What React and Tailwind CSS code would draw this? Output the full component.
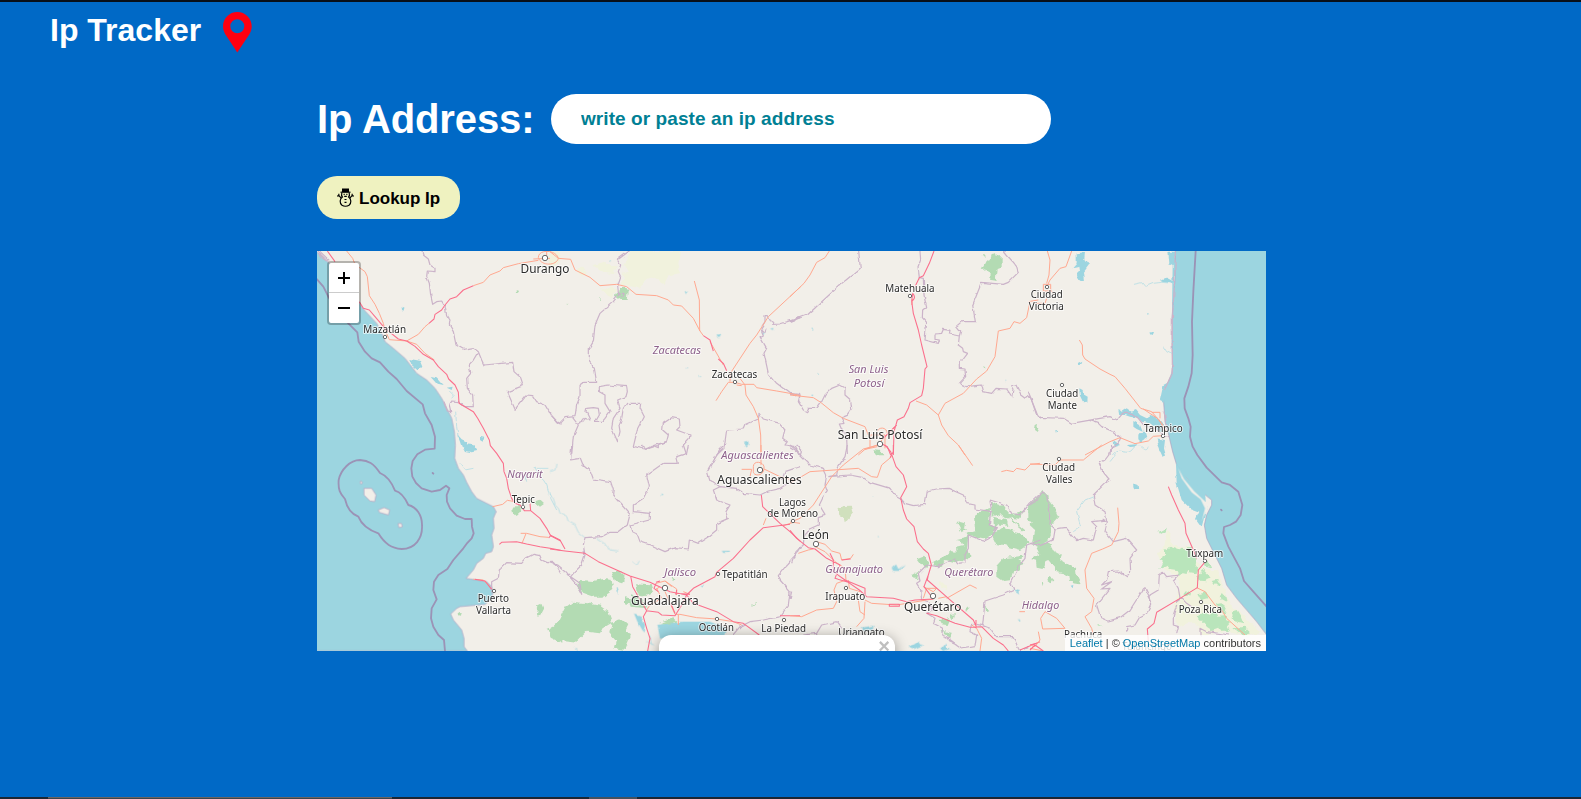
import React from 'react';

const WATER = '#9cd5e0';
const BORDER = '#cbb3c9';
const MARITIME = '#9b93b6';
const MOTORWAY = '#fb6f8c';
const TRUNK = '#ffa890';
const FOREST = '#b3dbb3';

/* Each sheet is drawn on a grid of thirds of a pixel and placed on the map by its origin. */
const sheets = [
  {
    at: 'translate(-7 -6) scale(.33333)',
    water:
      'M0,0 L21,20 45,45 65,60 100,110 150,178 165,198 200,235 215,265 225,290 250,310 285,340 320,385 350,405 375,430 395,460 410,490 425,520 433,560 436,600 434,640 445,670 460,690 470,712 485,740 500,760 530,775 550,785 558,800 550,820 552,850 545,870 550,905 545,920 527,925 520,940 500,955 490,975 468,1000 500,1005 530,1010 545,1025 548,1045 545,1060 525,1078 450,1085 440,1090 422,1107 430,1125 455,1155 462,1180 462,1205 472,1218 0,1218 Z',
    ponds:
      'M298,342 L330,348 337,365 325,378 305,360Z M278,185 L286,190 284,200 279,198Z M362,396 L380,400 398,420 380,416Z M410,428 L428,425 425,435Z M442,568 L455,583 475,592 470,598 490,600 502,618 485,622 455,605Z M510,573 L523,576 518,587 510,582Z M455,600 L480,608 500,612 485,622 465,618Z',
    streams:
      'M437,500 L440,545 445,580 M418,438 L430,450 422,460 M450,655 L465,675 490,670 M672,665 L690,690 710,720 722,760 740,795 M680,670 L715,670 M645,690 L650,710',
    forest:
      'M617,133 L627,134 624,144 618,142Z M610,785 L630,782 634,800 620,813 612,805Z M672,770 L688,764 702,777 690,785Z M682,1082 L694,1076 700,1090 688,1112 678,1108Z M712,1152 L735,1142 760,1146 760,1196 722,1178Z M446,1102 L455,1101 453,1112 447,1111Z',
    border:
      'M336,18 L340,30 355,42 360,60 375,70 375,80 352,78 350,95 358,115 362,150 368,178 380,170 395,168 405,185 410,210 420,225 418,240 430,260 438,300 460,313 490,308 505,320 515,345 522,360 608,352 612,380 632,398 640,422 592,440 615,493 650,450 668,452 680,470 705,480 720,505 740,530 752,538 M505,320 L490,345 478,358 482,385 470,400 472,430 488,450 490,485 465,485 445,470 425,468 420,480 425,500 412,498 402,470 M545,1045 L545,1010 565,1000 568,975 590,953 635,955 650,938 670,928 690,932 695,945 712,953 730,952 742,968 752,985 M21,25 L50,45 M21,18 L55,50 M28,18 L58,46',
    maritime:
      'M21,103 L40,125 55,155 80,195 115,235 142,262 146,290 165,320 185,340 210,352 235,380 260,402 290,438 338,478 345,505 365,540 375,575 374,611 345,614 322,628 308,648 304,670 307,695 318,714 335,730 365,740 390,735 408,722 418,730 410,750 411,770 420,790 440,812 465,822 485,822 486,845 491,865 485,880 470,896 460,910 430,945 412,972 385,990 372,1010 370,1035 380,1063 365,1090 363,1120 370,1145 385,1170 402,1185 405,1218 M150,645 C120,645 92,675 86,705 C84,735 90,745 105,762 C110,785 120,805 145,815 C155,840 175,855 205,865 C225,898 245,909 275,912 C315,912 338,880 336,842 C337,812 320,786 295,780 C285,758 275,742 255,737 C245,712 230,692 210,684 C190,654 175,647 150,645Z M368,684 L370,686',
    trunk:
      'M110,18 L128,40 135,58 165,80 172,95 178,152 195,178 208,205 220,235 225,255 238,284 290,288 325,268 345,245 357,235 M490,122 L520,112 540,90 570,78 580,68 625,56 685,46 M290,288 L320,298 345,325 373,345 M548,785 L578,778 592,766 615,770 M632,865 L650,865 690,875 715,877 M648,866 L636,895 M490,1003 L520,1005 540,1025',
    motorway:
      'M52,18 L75,50 M148,170 L160,190 178,195 195,215 225,250 265,282 290,288 315,304 340,328 370,345 385,365 410,388 416,402 435,420 445,442 447,475 490,500 503,520 520,550 538,585 541,602 560,625 580,655 582,680 590,700 595,730 605,760 615,775 630,780 643,797 662,797 690,820 710,850 722,872 752,888 M660,775 L662,797 M357,235 L372,222 375,208 395,195 405,180 420,162 440,155 460,135 490,122 M568,898 L575,892 620,890 650,897 690,905 720,910 752,916 M495,1003 L525,1008 545,1033 M722,872 L716,879',
  },
  {
    at: 'translate(233 -6) scale(.33333)',
    scrub:
      'M0,18 H20 L35,40 20,60 0,68Z M242,18 H390 L385,55 390,85 350,92 348,120 310,95 290,105 265,128 212,120 225,100 215,85 240,75 220,62Z M80,70 L100,68 110,85 90,90Z M130,60 L160,50 200,65 195,85 160,80Z M150,125 L200,130 188,160 165,150Z',
    ponds:
      'M404,140 L414,137 408,147Z M500,270 L513,271 508,279 502,277Z M660,250 L671,249 668,255Z M582,590 L595,588 596,598 588,605Z M445,390 L451,392 448,397Z M407,366 L412,367 408,371Z M175,46 L183,46 180,50Z M634,258 L645,262 641,267Z',
    forest:
      'M203,132 L222,126 233,142 230,165 212,165 198,155Z M147,158 L150,163 147,166Z M50,176 L54,177 51,180Z',
    border:
      'M238,18 L215,35 202,45 212,60 205,80 212,95 203,120 206,150 190,170 150,205 135,240 130,290 118,310 118,350 133,370 140,412 98,412 90,425 90,455 80,480 75,515 45,518 28,535 0,508 M68,518 L85,540 70,575 65,630 M85,535 L100,528 105,520 120,525 108,500 110,490 130,488 145,490 148,510 135,532 155,532 165,520 180,500 165,475 165,450 148,440 148,425 175,420 230,425 232,440 228,455 203,465 210,490 190,520 185,550 203,590 210,560 207,540 215,520 220,490 230,475 272,475 270,490 283,515 262,555 250,605 285,612 305,600 325,608 325,598 350,590 355,570 338,555 340,535 365,518 388,522 390,545 380,555 420,570 418,580 400,600 410,630 M205,145 L222,145 220,155 208,158 M750,218 L690,237 668,238 655,212 645,212 645,230 632,250 640,270 630,275 650,310 642,325 655,385 680,415 720,445 748,448 750,475 M500,630 L522,610 530,555 580,552 585,540 625,522 627,505 640,522 690,535 705,552 698,580 712,590 705,600 735,605 750,630 M635,252 L645,262 648,250',
    trunk:
      'M0,20 L25,40 62,43 75,75 120,97 150,122 200,118 230,125 258,148 320,152 355,165 370,180 395,183 430,220 450,258 460,272 M433,108 L448,165 449,258 M752,125 L655,215 620,270 600,295 541,385 540,410 M480,290 L520,360 M535,412 L515,440 510,448 498,467 M535,412 L555,412 575,418 612,418 620,428 680,438 720,445 752,452 M560,420 L575,422 M570,400 L585,420 588,450 610,485 625,520 632,570 633,630 M-35,38 C-35,10 20,15 25,40 C20,62 -25,65 -35,38Z M-50,42 L0,40 M-10,18 V35',
    motorway: 'M460,272 L480,285 490,318 M505,342 L520,355 530,377',
  },
  {
    at: 'translate(473 -6) scale(.33333)',
    ponds:
      'M63,251 L71,253 69,257Z M84,382 L91,384 86,387Z M646,407 L650,409 647,411Z M64,449 L71,450 66,454Z',
    forest:
      'M590,42 L602,40 605,30 618,28 620,35 635,33 635,70 620,75 618,98 620,108 600,105 602,88 588,70 575,72Z M575,30 L585,32 580,38Z M585,364 L590,370 583,370Z M735,538 L745,550 740,562Z M250,615 L275,618 280,628 258,628Z',
    border:
      'M206,18 L211,70 150,120 52,210 0,230 M390,18 L392,45 384,65 388,98 400,100 402,150 410,185 398,195 397,218 410,232 405,285 445,295 448,285 435,283 435,267 455,265 460,253 480,256 478,267 508,273 512,258 500,243 515,230 556,230 548,180 575,112 640,118 655,112 685,82 680,65 668,50 640,18 M508,273 L505,300 518,310 520,320 533,325 518,345 508,345 508,370 525,372 527,395 508,415 530,425 575,420 580,440 605,445 618,430 650,432 668,458 672,432 665,422 678,420 692,450 705,460 712,452 722,458 740,510 752,520 M0,448 L30,450 25,470 40,495 50,500 55,490 80,490 95,470 105,450 125,430 150,420 165,428 165,450 182,465 185,490 172,508 155,515 165,535 148,537 158,560 170,575 172,630 M0,608 L35,630',
    trunk:
      'M118,18 L105,38 80,52 60,90 42,115 0,155 M0,450 L70,458 92,472 130,503 160,520 225,545 235,570 M378,468 L410,480 445,510 455,540 475,572 505,600 525,630 M445,510 L465,475 520,445 560,402 590,378 615,335 625,258 660,250 672,230 690,235 710,218 720,170 M745,165 L715,170 M205,630 L225,613 262,600 290,570 315,545 M225,613 L262,605 M240,570 H285 V610 M240,570 V606 M262,560 C265,545 290,545 292,565 M368,162 L365,180',
    motorway:
      'M432,18 L418,55 400,92 388,98 375,125 M368,145 C378,155 372,165 365,168 L370,205 385,255 395,300 411,365 405,372 400,430 395,452 360,473 355,490 342,515 322,525 312,560 310,630 M320,540 L295,565 278,582 M278,598 L292,605 302,630 M368,145 L365,168',
  },
  {
    at: 'translate(713 -6) scale(.33333)',
    water:
      'M437,0 L436,60 435,100 432,140 426,220 426,300 428,360 425,385 415,410 405,430 400,460 403,500 405,530 415,565 428,620 440,660 460,690 490,720 520,745 545,765 545,780 530,810 523,840 530,880 550,920 575,970 590,1020 620,1060 650,1095 680,1130 712,1172 V0Z',
    ponds:
      'M140,25 L165,22 163,42 177,60 162,80 165,108 140,100 138,90 150,78 148,65 127,70 140,55Z M415,20 H437 L432,190 426,190 428,60 418,55Z M390,104 L410,98 432,110 430,116 395,110Z M362,258 L372,262 368,270 363,268Z M350,205 L358,206 353,209Z M142,355 L157,347 152,360 145,360Z M148,430 L158,435 160,448 173,455 172,470 158,472 150,455Z M265,492 L275,500 290,490 305,500 318,495 330,510 350,520 365,510 385,520 400,540 395,560 385,560 375,545 355,535 335,530 325,518 300,515 285,510 268,510Z M310,528 L330,540 338,560 320,552 310,545Z M325,565 L345,563 350,580 335,590 325,580Z M400,420 L418,410 400,470 390,465Z M380,580 L405,585 400,628 388,618Z M75,555 L82,560 78,568Z M250,585 L270,600 255,605Z M438,655 L448,668 470,700 500,715 525,745 530,790 515,845 498,822 508,800 480,790 455,765 440,715Z M310,716 L325,720 328,735 312,732Z M382,600 L400,603 408,632 398,635Z M290,600 L320,598 325,604 300,606Z',
    land: 'M445,670 L462,702 492,738 515,760 532,775 535,790 522,812 515,830 525,790 512,763 485,742 455,700Z',
    streams:
      'M312,118 L335,113 345,125 370,115 395,112 432,115 M400,305 L410,320 426,328 M250,630 C270,600 290,640 310,610 S345,635 355,605 M190,755 L165,765 140,800 152,845 130,860 M260,625 L240,650',
    forest: 'M14,540 L24,537 20,560 12,555Z',
    border:
      'M-5,440 L25,517 100,520 125,535 210,520 240,515 262,525 278,505 305,505 325,520 345,545 375,550 400,572 418,575 M175,525 L205,535 215,545 250,560 272,578 265,595 245,605 243,630 M436,18 L434,110 427,220 427,385 403,435 M402,500 L410,540',
    maritime:
      'M497,18 L490,140 486,230 488,330 485,385 475,425 463,460 464,490 475,520 482,545 480,575 488,605 502,630 530,668 575,712 600,720 625,740 637,780 632,810 618,830 600,840 582,846 580,865 595,905 630,970 642,1008 670,1040 710,1085 M573,794 L575,796',
    trunk:
      'M52,18 L60,45 57,90 50,115 M125,18 L108,65 90,70 60,105 52,122 M40,118 H62 V138 H40Z M62,135 L70,145 M20,175 L45,175 50,160 M148,285 L157,300 158,330 165,342 210,372 240,388 255,395 285,430 332,490 365,500 395,535 410,560 M365,502 H390 V520 M340,492 L385,522 408,560 M165,630 L240,590 270,578 315,596 355,588 370,574 398,572',
  },
  {
    at: 'translate(233 194) scale(.33333)',
    ponds:
      'M322,540 L400,530 480,530 530,550 525,580 330,580Z M200,425 L208,432 204,450Z M252,505 L272,512 285,540 280,560 262,530Z M515,318 L540,318 538,323 520,324Z M334,145 L341,150 337,155Z M452,420 L462,418 458,424Z M75,610 L82,610 80,618Z',
    streams:
      'M-5,148 L10,160 15,180 25,190 30,205 50,215 55,230 75,240 85,262 105,278 M140,280 L170,300 180,315 205,318 M0,80 L15,75 18,55 M245,350 L260,362 268,348 M300,575 L305,600 M292,590 L312,600',
    forest:
      'M88,405 L130,408 160,402 185,405 190,435 160,455 130,455 100,445 85,425Z M183,378 L210,378 227,395 220,412 195,408Z M255,415 L305,418 312,440 285,450 260,445Z M0,550 L20,535 45,485 65,470 110,475 150,482 175,500 186,530 160,545 150,565 110,560 80,590 35,585 10,570Z M185,530 L215,522 235,540 225,560 243,570 225,615 195,610 200,590 178,565Z M240,448 L275,460 290,490 245,485 240,470Z M225,457 L243,460 242,478 225,475Z M325,535 L370,520 382,530 350,538Z M365,398 L378,402 370,410Z M338,572 L350,570 340,580Z M605,480 L622,472 610,482Z',
    border:
      'M65,0 L62,45 90,40 98,60 122,80 130,102 182,110 190,135 188,150 215,180 240,208 232,240 205,262 180,262 155,275 105,278 100,300 105,330 95,360 75,380 62,395 90,415 95,445 85,425 45,380 20,360 0,352 M415,0 L410,25 380,35 385,55 340,55 290,90 298,125 280,160 250,180 250,200 298,205 298,225 240,240 245,260 262,268 270,290 300,300 345,320 375,308 415,312 418,285 445,295 475,275 500,255 500,235 535,220 528,200 540,180 500,165 490,135 510,125 480,105 472,80 495,40 510,15 520,5 M275,0 L290,8 350,-10 M510,125 L560,130 580,145 630,150 655,138 690,130 720,112 M750,305 L740,325 710,360 685,392 690,405 720,440 715,480 690,515 640,525 600,530 570,545 540,580 M695,105 L705,80 750,65',
    trunk:
      'M375,508 L390,508 440,518 500,522 550,530 575,540 M385,510 L385,540 M318,415 L345,408 380,432 380,450 M320,430 L335,460 300,480 290,495 M345,440 L375,508 M400,440 L420,448 M633,0 V60 M610,65 C610,45 640,50 642,65 C645,95 610,95 610,80Z M575,73 H605 L600,95 M642,72 L690,95 730,105 M640,240 L648,220 M345,408 L365,425 M750,235 L730,232 700,242 M315,435 L330,425',
    motorway:
      'M0,270 L30,285 45,312 M0,312 L45,318 105,325 145,350 200,375 240,393 300,412 360,440 410,450 430,475 500,500 550,530 580,535 628,570 M242,393 L248,425 265,455 290,497 325,502 335,510 375,512 395,480 410,450 430,430 495,395 500,382 550,340 600,285 640,248 720,238 M634,150 L638,185 690,235 720,260 752,290 M290,497 L280,515 290,550 300,580 293,618 M362,475 L375,505 M318,415 L312,430 325,440 M690,512 L750,512 M375,445 L420,448 M318,412 L330,408 M380,435 L378,450',
  },
  {
    at: 'translate(473 194) scale(.33333)',
    scrub: 'M445,408 L470,420 472,432 450,425Z',
    park: 'M142,190 L160,183 185,182 190,200 178,215 165,232 155,215 148,210Z',
    ponds:
      'M305,370 L318,358 325,372 345,360 328,378 310,378Z M355,605 L370,600 385,590 390,598 400,600 370,613Z M450,610 L462,606 470,595 470,605 480,612 460,618Z M250,155 L255,157 252,158Z M685,520 L692,528 686,530Z M215,548 L250,542 248,555 225,558Z M665,432 L688,438 690,450 675,440Z M264,272 L267,276 264,277Z',
    forest:
      'M555,212 L575,200 600,192 598,225 598,240 622,248 605,272 580,280 555,275 535,275 530,315 545,330 530,345 520,352 505,350 495,355 470,348 452,362 435,365 430,350 460,335 480,318 500,320 498,305 520,300 512,285 500,282 530,275 535,262 558,255Z M502,238 L510,228 525,232 522,248 532,255 515,262Z M602,170 L625,182 640,180 665,210 700,200 690,218 665,216 655,225 630,205 605,215Z M610,215 L650,225 655,240 625,235 612,248Z M655,215 L705,255 698,255 655,222Z M715,178 L750,150 V292 L735,288 738,255 722,240 728,220 715,205Z M605,270 L640,245 665,255 690,262 710,285 720,295 690,315 655,305 620,300Z M622,360 L640,340 700,332 698,345 685,345 700,355 690,370 670,380 662,405 640,408 622,395Z M380,340 L400,332 415,350 410,362 395,360Z M368,390 L385,380 382,402 370,400Z M530,480 L540,490 530,500Z M480,510 L495,508 490,525Z M448,525 L478,520 470,540 455,538Z M582,485 L602,502 585,505Z M455,555 L485,560 482,575 460,565Z',
    border:
      'M20,0 L35,15 30,30 60,60 100,70 110,90 M172,0 L165,35 145,65 140,90 115,95 M110,90 L105,120 112,140 100,155 88,180 105,208 85,215 85,240 58,252 42,275 40,300 18,320 5,355 M115,95 L180,90 220,98 240,112 300,130 315,150 330,158 345,175 370,182 405,178 412,138 440,132 475,130 520,150 530,175 555,180 555,192 605,200 600,165 650,180 665,205 690,210 720,175 752,145 M602,200 L598,240 622,248 605,275 580,288 535,270 535,310 525,330 525,352 505,355 495,345 470,350 445,365 410,360 385,385 390,408 380,415 392,435 395,465 412,470 430,495 410,505 435,520 430,535 458,550 455,570 475,578 478,590 500,600 M0,0 L35,30 M752,285 L710,300 705,340 690,360 662,412 672,435 640,450 585,468 578,542 600,550 620,575 670,575 685,610 690,618 M578,542 L545,535 540,560 560,570 555,605 515,612 470,580 M0,460 L5,440 M40,570 L80,565 95,540 140,530 155,550 M700,610 L712,605',
    trunk:
      'M220,12 L265,0 M220,12 L160,60 125,95 70,180 30,220 0,232 M0,115 L60,80 205,70 245,95 262,97 275,60 305,35 M505,0 L548,62 M634,80 L650,76 670,80 680,70 705,75 722,58 750,55 M0,512 L35,515 80,495 130,490 140,470 132,435 140,415 168,405 M168,405 L165,370 135,350 105,320 75,305 M80,290 L105,298 125,318 150,325 155,345 M25,325 L55,315 70,312 M155,345 L182,340 190,328 M225,465 L245,475 320,480 350,475 410,465 430,462 M205,465 L210,500 225,510 M225,470 L222,520 200,545 M470,460 L540,420 560,430 M400,425 L430,440 440,430 410,430 400,460 M545,540 L560,550 575,580 570,618 M175,405 L178,430 210,440 M470,455 L445,460 M688,500 L705,500',
    motorway:
      'M285,0 L302,20 318,65 340,90 350,125 332,158 340,195 350,222 372,245 382,290 400,312 415,325 424,360 415,390 412,405 475,460 550,525 558,543 M310,0 V20 L300,38 M0,256 L20,280 55,308 75,312 110,340 150,360 135,400 175,412 208,435 230,455 310,460 350,470 375,465 430,462 M415,390 L402,425 425,455 M120,325 L130,345 130,380 165,405 M165,405 L225,430 225,450 M298,478 H328 V484 H298Z M410,505 L440,512 495,535 540,547 575,545 610,580 640,600 655,618 M155,345 L182,342 M690,615 L750,590 M558,525 V550',
  },
  {
    at: 'translate(713 194) scale(.33333)',
    scrub:
      'M380,320 L400,315 410,260 425,262 420,300 470,305 500,350 530,375 560,375 580,430 600,480 640,510 690,560 650,575 600,560 520,570 490,530 440,545 430,480 450,430 440,395 400,370Z',
    forest:
      'M20,165 L40,138 52,150 55,165 75,190 85,218 70,235 58,238 62,262 50,290 30,300 5,295 15,250 5,230 -5,228 -5,180Z M15,300 L60,292 68,315 95,330 92,345 115,360 138,375 140,390 152,415 120,410 118,395 100,385 75,380 75,365 58,345 40,360 42,370 20,365 18,350 0,345 28,325Z M60,395 L70,402 64,415 55,408Z M38,405 L40,420 33,425Z',
    woods:
      'M405,315 L420,308 440,315 455,305 470,310 485,308 482,325 500,340 497,360 505,372 498,388 480,385 475,368 470,390 445,385 440,375 420,372 412,362 388,372 398,352 388,345 405,335Z M395,255 L410,248 408,262 398,268 385,262Z M500,512 L520,500 540,510 560,500 565,512 590,510 588,525 602,532 590,545 598,560 570,560 565,548 545,555 530,545 525,530 508,530Z M505,395 L520,375 530,385 542,398 525,402 530,412 510,410Z M520,352 L535,350 545,360 540,370 525,365Z M555,480 L575,478 590,490 585,505 570,498Z M602,500 L620,495 632,515 640,535 622,530Z M610,550 L640,545 660,565 640,572Z M460,448 L470,436 480,450 468,455Z M455,480 L470,485 460,500Z M505,448 L530,442 535,460 515,465Z M548,405 L560,402 570,420 558,418Z M570,445 L585,450 590,470 575,462Z M200,540 L220,542 210,546Z',
    ponds: 'M122,422 L130,420 128,430Z M310,116 L325,120 328,135 312,132Z',
    border:
      'M245,0 L240,25 225,45 208,55 218,80 240,105 225,115 190,150 195,180 225,200 230,225 185,230 200,245 190,285 160,280 140,287 110,250 75,255 60,240 62,210 50,155 38,140 20,165 0,180 M75,255 L70,285 30,302 0,295 M218,222 L232,230 225,260 250,290 290,280 320,315 300,340 302,380 290,395 265,378 235,380 230,405 215,420 245,410 215,432 240,430 200,480 212,518 235,528 270,518 300,495 340,432 345,428 365,470 350,505 330,515 315,540 290,545 290,560 M362,470 L360,450 385,435 388,390 400,382 410,395 445,390 430,405 445,430 450,458 440,470 455,460 470,475 485,485 M440,480 L430,510 430,540 445,545 440,565 M510,575 V550 L530,560 600,570',
    trunk:
      'M215,0 L160,45 90,45 75,60 0,57 M263,188 L267,235 265,260 245,300 218,312 185,325 165,375 170,430 192,460 185,500 165,515 185,550 190,570 M45,500 L80,520 105,550 38,552 32,520 45,500 M500,428 L525,440 555,480 575,495 590,520 645,570 M25,560 L30,585 15,605 0,600 M0,610 L40,618',
    motorway:
      'M415,125 L425,150 445,195 465,235 468,265 490,315 500,340 M524,352 L505,375 502,428 450,460 380,502 372,535 352,552 355,590 M0,615 L15,600 40,618 M20,595 L0,600',
  },
];

const labels = [
  ['Durango', 228, 21.500, 12, 49],
  ['Mazatlán', 67.7, 82, 10, 42.7],
  ['Zacatecas', 417.5, 127, 10, 45.7],
  ['Matehuala', 593, 41, 10, 49.3],
  ['San Luis Potosí', 563, 187.6, 12, 84.7],
  ['Ciudad', 729.7, 47.4, 10, 32],
  ['Victoria', 729.3, 59.4, 10, 35.3],
  ['Ciudad', 745.2, 146, 10, 32.3],
  ['Mante', 745.3, 158, 10, 29.3],
  ['Tampico', 846.3, 180.6, 10, 38.7],
  ['Tepic', 206.3, 252, 10, 23.3],
  ['Puerto', 176.3, 351, 10, 31.3],
  ['Vallarta', 176.5, 363, 10, 35],
  ['Aguascalientes', 442.5, 233, 12, 84.3],
  ['Lagos', 475.5, 254.7, 10, 27],
  ['de Moreno', 475.7, 266.4, 10, 50.7],
  ['León', 498.5, 288.3, 12, 27],
  ['Tepatitlán', 427.8, 327, 10, 45.7],
  ['Guadalajara', 347.8, 353.7, 12, 67.7],
  ['Ocotlán', 399.3, 380.3, 10, 35.3],
  ['La Piedad', 466.7, 380.6, 10, 44.7],
  ['Uriangato', 544.5, 384.6, 10, 46.3],
  ['Irapuato', 528.3, 348.7, 10, 40],
  ['Querétaro', 615.7, 360.3, 12, 57.3],
  ['Ciudad', 741.7, 220, 10, 32.7],
  ['Valles', 742.2, 232, 10, 26.3],
  ['Túxpam', 887.8, 306.3, 10, 37],
  ['Poza Rica', 883.3, 362, 10, 43.3],
  ['Pachuca', 766.2, 387, 10, 38.3],
  ['Tulancingo', 830, 398.5, 10, 50],
];

const states = [
  ['Zacatecas', 359.8, 103, 48.3],
  ['San Luis', 551.5, 122.4, 39.7],
  ['Potosí', 552, 135.6, 30.7],
  ['Nayarit', 208, 226.6, 35.3],
  ['Aguascalientes', 440.5, 207.6, 72.3],
  ['Jalisco', 363.2, 325, 31.7],
  ['Guanajuato', 537.2, 322.3, 57.7],
  ['Querétaro', 651.8, 325, 49],
  ['Hidalgo', 723.5, 357.7, 37.6],
];

const towns = [
  [228, 7, 2.7], [68, 86, 1.7], [418, 131, 1.7], [593, 45, 1.7], [563, 193, 2.7],
  [730, 36, 1.7], [745, 134, 1.7], [846, 185, 1.7], [206, 256, 1.7], [177, 340, 1.7],
  [443, 219, 2.7], [476, 270, 1.7], [499, 293, 2.7], [401, 323, 1.7], [348, 337, 2.7],
  [400, 368, 1.7], [467, 369, 1.7], [529, 337, 1.7], [616, 345, 2.7], [742, 208, 1.7],
  [888, 310, 1.7], [884, 351, 1.7],
];

function MapTiles() {
  return (
    <svg viewBox="0 0 949 400" width="949" height="400" className="block" fill="none" strokeLinejoin="round">
      <defs>
        <filter id="ragged" filterUnits="userSpaceOnUse" x="0" y="0" width="949" height="400">
          <feTurbulence type="fractalNoise" baseFrequency="0.14" numOctaves="2" seed="4" />
          <feDisplacementMap in="SourceGraphic" scale="6" xChannelSelector="R" yChannelSelector="G" />
        </filter>
        <filter id="meander" filterUnits="userSpaceOnUse" x="0" y="0" width="949" height="400">
          <feTurbulence type="fractalNoise" baseFrequency="0.16" numOctaves="1" seed="9" />
          <feDisplacementMap in="SourceGraphic" scale="4" xChannelSelector="R" yChannelSelector="G" />
        </filter>
      </defs>

      <rect width="949" height="400" fill="#f2efe9" />
      <g filter="url(#ragged)">
        {sheets.map((s) => (
          <g key={s.at} transform={s.at}>
            {s.scrub && <path d={s.scrub} fill="#f1f2dd" />}
            {s.park && <path d={s.park} fill="#d0e0bd" />}
            {s.forest && <path d={s.forest} fill={FOREST} />}
            {s.woods && <path d={s.woods} fill="#b9e5bb" />}
          </g>
        ))}
      </g>
      {sheets.map((s) => (
        <g key={s.at} transform={s.at}>
          {s.water && <path d={s.water} fill={WATER} stroke="#a99fc0" strokeWidth="2" />}
        </g>
      ))}
      <g filter="url(#meander)">
        {sheets.map((s) => (
          <g key={s.at} transform={s.at}>
            {s.ponds && <path d={s.ponds} fill={WATER} />}
            {s.streams && <path d={s.streams} stroke="#b4dde4" strokeWidth="2.4" />}
          </g>
        ))}
      </g>
      {sheets.map((s) => (
        <g key={s.at} transform={s.at}>
          {s.land && <path d={s.land} fill="#f2efe9" />}
        </g>
      ))}
      <g transform="translate(-7 194) scale(.33333)" fill="#f2efe9" stroke="#b79fbd" strokeWidth="2">
        <path d="M162,130 L185,130 198,150 194,170 180,168 162,150Z M205,195 L222,188 239,195 235,210 208,202Z M264,236 L274,235 277,245 267,248Z M152,108 L157,112 155,117 150,115Z" />
      </g>
      <g filter="url(#meander)">
        {sheets.map((s) => (
          <g key={s.at} transform={s.at}>
            {s.border && <path d={s.border} stroke={BORDER} strokeWidth="3.6" />}
          </g>
        ))}
      </g>
      {sheets.map((s) => (
        <g key={s.at} transform={s.at}>
          {s.maritime && <path d={s.maritime} stroke={MARITIME} strokeWidth="5.5" strokeLinecap="round" />}
          {s.trunk && <path d={s.trunk} stroke={TRUNK} strokeWidth="3" />}
          {s.motorway && <path d={s.motorway} stroke={MOTORWAY} strokeWidth="3.2" />}
        </g>
      ))}
      {towns.map(([x, y, r]) => (
        <circle key={`${x}-${y}`} cx={x} cy={y} r={r} fill="#fff" stroke="#666" strokeWidth="1" />
      ))}
      <g
        textAnchor="middle"
        fontFamily="'Noto Sans', sans-serif"
        stroke="#ffffffb0"
        strokeWidth="2"
        style={{ paintOrder: 'stroke' }}
      >
        {states.map(([name, x, y, w]) => (
          <text key={name + x} x={x} y={y} fontSize="11" fontStyle="italic" fill="#8d618b" textLength={w} lengthAdjust="spacingAndGlyphs">
            {name}
          </text>
        ))}
        {labels.map(([name, x, y, size, w]) => (
          <text key={name + x} x={x} y={y} fontSize={size} fill="#2b2b2b" textLength={w} lengthAdjust="spacingAndGlyphs">
            {name}
          </text>
        ))}
      </g>
    </svg>
  );
}

function PinIcon() {
  return (
    <svg width="29" height="41" viewBox="0 0 29 41" className="block" fill="#ff0010">
      <path
        fillRule="evenodd"
        d="M14.300 0C6.400 0 0 6.300 0 14.300c0 3 .8 5.100 2.300 8L14.300 40.500 26.400 22.300c1.500-2.900 2.300-5 2.300-8C28.700 6.300 22.300 0 14.300 0Zm0 7.300a7 7 0 1 1 0 14 7 7 0 0 1 0-14Z"
      />
    </svg>
  );
}

function SnowmanIcon() {
  return (
    <svg width="17" height="19" viewBox="0 0 17 19" className="block" fill="none" stroke="#000" strokeWidth="1.200">
      <path d="M5 .5h7v3.600H5Z" fill="#000" stroke="none" />
      <path d="M3.500 4.200h10" />
      <path d="M4.800 4.800C4.200 7 4.600 8.200 5.400 9c-2.700 2-3.100 6-.4 8.300 1.800 1.100 5.200 1.100 7 0 2.700-2.300 2.300-6.300-.4-8.300.8-.8 1.200-2 .6-4.200" />
      <path d="M4.200 10.200 1.500 7.200M.2 8.200l1.700-.5-.1-2M12.800 10.200 15.500 7.200m1.300 1-1.700-.5.1-2" />
      <path d="M6.600 6.300h1.100m1.600 0h1.100M7.200 8.300h2.600M7.500 11.500h2M7.500 14.300h2" />
    </svg>
  );
}

export default function App() {
  return (
    <div className="flex h-[799px] w-[1581px] flex-col overflow-hidden bg-[#0069c6] font-['Liberation_Sans',Arial,sans-serif]">
      <div className="h-[2px] shrink-0 bg-[#080f18]" />

      <header className="flex h-[56px] shrink-0 items-start pl-[50px] pt-[9px]">
        <h1 className="w-[173px] text-[32px] leading-[38px] font-bold whitespace-nowrap text-white">Ip Tracker</h1>
        <div className="pt-px">
          <PinIcon />
        </div>
      </header>

      <main className="ml-[317px] flex w-[949px] grow flex-col items-start pt-9">
        <form className="flex flex-col items-start" onSubmit={(e) => e.preventDefault()}>
          <div className="flex h-[50px] items-center">
            <label htmlFor="ip" className="w-[234px] text-[40px] leading-[50px] font-bold tracking-[-0.1px] whitespace-nowrap text-white">
              Ip Address:
            </label>
            <input
              id="ip"
              type="text"
              placeholder="write or paste an ip address"
              className="h-[50px] w-[500px] rounded-[25px] bg-white px-[30px] text-[19px] font-bold tracking-[0.08px] text-[#008094] outline-none placeholder:text-[#008094] placeholder:opacity-100"
            />
          </div>
          <button
            type="submit"
            className="mt-8 flex h-[43px] w-[143px] items-center gap-[5px] rounded-[20px] bg-[#eff2c0] pl-5 text-[17px] font-bold whitespace-nowrap text-black"
          >
            <SnowmanIcon />
            <span className="pt-[2px]">Lookup Ip</span>
          </button>
        </form>

        <section className="relative mt-8 h-[400px] w-[949px] overflow-hidden">
          <MapTiles />

          <div className="absolute top-[384px] left-[342px] h-[60px] w-[236px] rounded-xl bg-white shadow-[0_3px_14px_rgba(0,0,0,0.4)]">
            <span className="absolute top-[1px] right-[5px] text-[20px] leading-[20px] font-bold text-[#bfbfbf]">×</span>
          </div>

          <div className="absolute top-[10px] left-[10px] flex h-[64px] w-[34px] flex-col overflow-hidden rounded border-2 border-black/25 bg-white bg-clip-padding text-black">
            <button className="flex h-[30px] items-center justify-center border-b border-[#ccc]" aria-label="Zoom in">
              <svg width="12" height="12" viewBox="0 0 12 12" stroke="#000" strokeWidth="2">
                <path d="M0 6h12M6 0v12" />
              </svg>
            </button>
            <button className="flex h-[30px] items-center justify-center" aria-label="Zoom out">
              <svg width="12" height="12" viewBox="0 0 12 12" stroke="#000" strokeWidth="2">
                <path d="M0 6h12" />
              </svg>
            </button>
          </div>

          <div className="absolute right-0 bottom-0 flex h-[16px] items-center bg-white/80 px-[5px] text-[11px] leading-[16px] whitespace-pre text-[#333]">
            <a className="text-[#0078a8]">Leaflet</a> | © <a className="text-[#0078a8]">OpenStreetMap</a> contributors
          </div>
        </section>
      </main>

      <div className="flex h-[2px] shrink-0 bg-[#1b2733]">
        <div className="ml-[48px] h-[2px] w-[344px] border-t border-[#6b6460] bg-[#3c454d]" />
        <div className="ml-[197px] h-[2px] w-[48px] bg-[#46525e]" />
      </div>
    </div>
  );
}
